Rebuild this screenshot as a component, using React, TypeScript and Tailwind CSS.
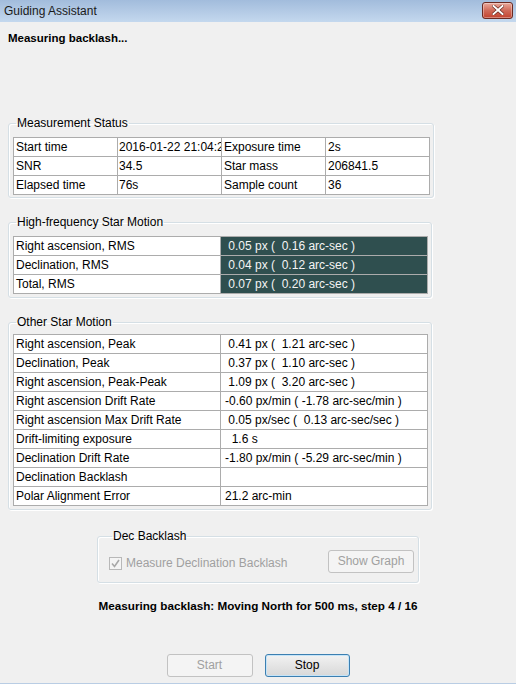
import React from "react";

const cellBase = "h-[19px] border-r border-b border-[#acacac] flex items-center overflow-hidden whitespace-pre leading-[15px]";

function Group({ title, className, children, pad }: { title: string; className: string; children: React.ReactNode; pad: string }) {
  return (
    <fieldset className={`border border-[#d5dfe5] rounded-[3px] shadow-[inset_1px_1px_0_#ffffff,1px_1px_0_#ffffff] ${className} ${pad}`}>
      <legend className="ml-[3px] px-[1px] text-[12px] leading-[15px] text-black">{title}</legend>
      {children}
    </fieldset>
  );
}

function TwoColTable({ rows, dark }: { rows: [string, string][]; dark?: boolean }) {
  return (
    <div className="grid grid-cols-[207px_207px] border-l border-t border-[#acacac] bg-white w-[415px]">
      {rows.map(([a, b], i) => (
        <React.Fragment key={i}>
          <div className={`${cellBase} pl-[2px] text-black`}>{a}</div>
          <div className={`${cellBase} pl-[4px] ${dark ? "bg-[#2f4f4f] text-[#f4f4f4]" : "text-black"}`}>{b}</div>
        </React.Fragment>
      ))}
    </div>
  );
}

export default function App() {
  const status: string[] = [
    "Start time", "2016-01-22 21:04:22", "Exposure time", "2s",
    "SNR", "34.5", "Star mass", "206841.5",
    "Elapsed time", "76s", "Sample count", "36",
  ];
  const hf: [string, string][] = [
    ["Right ascension, RMS", " 0.05 px (  0.16 arc-sec )"],
    ["Declination, RMS", " 0.04 px (  0.12 arc-sec )"],
    ["Total, RMS", " 0.07 px (  0.20 arc-sec )"],
  ];
  const other: [string, string][] = [
    ["Right ascension, Peak", " 0.41 px (  1.21 arc-sec )"],
    ["Declination, Peak", " 0.37 px (  1.10 arc-sec )"],
    ["Right ascension, Peak-Peak", " 1.09 px (  3.20 arc-sec )"],
    ["Right ascension Drift Rate", "-0.60 px/min ( -1.78 arc-sec/min )"],
    ["Right ascension Max Drift Rate", " 0.05 px/sec (  0.13 arc-sec/sec )"],
    ["Drift-limiting exposure", "  1.6 s"],
    ["Declination Drift Rate", "-1.80 px/min ( -5.29 arc-sec/min )"],
    ["Declination Backlash", ""],
    ["Polar Alignment Error", "21.2 arc-min"],
  ];

  return (
    <div className="w-[516px] h-[684px] bg-[#f0f0f0] border-b border-[#b9cde4] flex flex-col font-['Liberation_Sans',Arial,sans-serif] text-[12px] text-black overflow-hidden">
      {/* Title bar */}
      <div className="h-[22px] shrink-0 bg-gradient-to-b from-[#a2bcdc] to-[#c4d8ee] flex items-center justify-between pl-[4px] pr-[3px]">
        <span className="text-[12px] leading-[16px] text-[#1a1a1a]">Guiding Assistant</span>
        <div className="w-[31px] h-[17px] mt-[-2px] rounded-[3px] border border-[#6b2a22] bg-gradient-to-b from-[#e9a99c] via-[#d06a59] to-[#c2412e] flex items-center justify-center shadow-[inset_0_0_0_1px_rgba(255,255,255,0.35)]">
          <svg width="12" height="10" viewBox="0 0 12 10">
            <path d="M1.5 1 L10.5 9 M10.5 1 L1.5 9" stroke="#5a1d15" strokeWidth="3.2" strokeLinecap="square" />
            <path d="M1.5 1 L10.5 9 M10.5 1 L1.5 9" stroke="#ffffff" strokeWidth="2" strokeLinecap="square" />
          </svg>
        </div>
      </div>

      <div className="flex flex-col px-[8px]">
        <div className="mt-[8px] font-bold leading-[16px] text-[11.5px]">Measuring backlash...</div>

        <Group title="Measurement Status" className="mt-[70px] w-[426px]" pad="pl-[4px] pr-[3px] pt-[6px] pb-[2px]">
          <div className="grid grid-cols-[104px_104px_104px_104px] border-l border-t border-[#acacac] bg-white w-[417px]">
            {status.map((t, i) => (
              <div key={i} className={`${cellBase} ${i % 4 === 1 ? "pl-[1px]" : "pl-[2px]"}`}>{t}</div>
            ))}
          </div>
        </Group>

        <Group title="High-frequency Star Motion" className="mt-[17px] w-[424px]" pad="pl-[4px] pr-[3px] pt-[6px] pb-[3px]">
          <TwoColTable rows={hf} dark />
        </Group>

        <Group title="Other Star Motion" className="mt-[17px] w-[424px]" pad="pl-[4px] pr-[3px] pt-[4px] pb-[3px]">
          <TwoColTable rows={other} />
        </Group>

        <div className="flex justify-center">
          <Group title="Dec Backlash" className="mt-[19px] w-[322px]" pad="pl-[11px] pr-[4px] pt-[6px] pb-[9px]">
            <div className="flex items-center justify-between h-[23px]">
              <div className="flex items-center gap-[4px] mt-[3px]">
                <div className="w-[13px] h-[13px] border border-[#b8b8b8] bg-[#f4f4f4] flex items-center justify-center">
                  <svg width="9" height="9" viewBox="0 0 9 9">
                    <path d="M1 4.5 L3.5 7.5 L8 1" stroke="#a8a8a8" strokeWidth="1.6" fill="none" />
                  </svg>
                </div>
                <span className="text-[#a0a0a0] leading-[15px]">Measure Declination Backlash</span>
              </div>
              <button className="w-[86px] h-[23px] rounded-[3px] border border-[#c2c2c2] bg-[#f4f4f4] text-[#a0a0a0] text-[12px] leading-[15px]">Show Graph</button>
            </div>
          </Group>
        </div>

        <div className="mt-[15px] text-center font-bold text-[11.7px] leading-[16px]">Measuring backlash: Moving North for 500 ms, step 4 / 16</div>

        <div className="mt-[40px] flex justify-center gap-[12px]">
          <button className="w-[86px] h-[23px] rounded-[3px] border border-[#c2c2c2] bg-[#f4f4f4] text-[#a0a0a0] text-[12px] leading-[15px]">Start</button>
          <button className="w-[85px] h-[23px] rounded-[3px] border border-[#3c7fb1] bg-gradient-to-b from-[#f2f2f2] to-[#d8d8d8] shadow-[inset_0_0_0_1px_#c5e4f8] text-black text-[12px] leading-[15px]">Stop</button>
        </div>
      </div>
    </div>
  );
}
